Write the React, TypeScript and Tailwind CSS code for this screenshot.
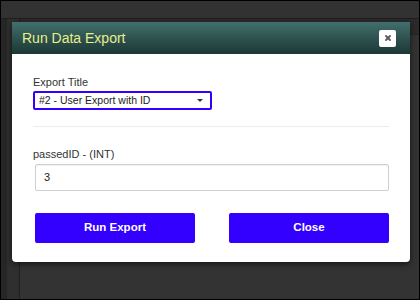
import { X } from 'lucide-react';

export default function App() {
  return (
    <div className="relative h-[300px] w-[420px] overflow-hidden border border-black bg-[#333333] font-['Liberation_Sans',Arial,sans-serif]">
      {/* page behind the modal */}
      <div className="h-[18px] border-b border-[#1e1e1e] bg-[#323232]" />
      <div className="flex h-full">
        <div className="w-[6px] bg-[#262626]" />
        <div className="w-[13px] border-r border-[#1f1f1f] bg-[#2f2f2f]" />
        <div className="flex-1">
          <div className="h-[16px] border-b border-[#262626] bg-[#2b2b2b]" />
        </div>
      </div>

      {/* modal */}
      <div className="absolute left-[11px] top-[21px] w-[398px] overflow-hidden rounded-b-[4px] bg-white shadow-[0_2px_6px_rgba(0,0,0,0.6)]">
        <div className="flex h-[32px] items-center justify-between bg-gradient-to-b from-[#426f6c] to-[#1c3836] pl-[10px] pr-[14px]">
          <span className="text-[14px] text-[#e6ef8a]">Run Data Export</span>
          <button className="flex h-[17px] w-[17px] items-center justify-center rounded-[2px] bg-white">
            <X className="h-[8px] w-[8px] text-[#5a5a5a]" strokeWidth={5.5} />
          </button>
        </div>

        <div className="px-[21px] pb-[19px] pt-[22px]">
          <div className="text-[11px] leading-[13px] text-[#333]">Export Title</div>
          <div className="mt-[2px] flex h-[19px] w-[179px] items-center justify-between rounded-[2px] border-2 border-[#3300ff] pl-[4px] pr-[7px]">
            <span className="text-[10.5px] text-[#222]">#2 - User Export with ID</span>
            <span className="h-0 w-0 border-x-[3px] border-t-[3px] border-x-transparent border-t-[#333]" />
          </div>

          <div className="mt-[16px] h-px bg-[#ececec]" />

          <div className="mt-[21px] text-[11px] leading-[13px] text-[#333]">passedID - (INT)</div>
          <div className="ml-[2px] mt-[3px] flex h-[27px] items-center rounded-[2px] border border-[#cfcfcf] pl-[8px] text-[11px] text-[#222] shadow-[inset_0_1px_1px_rgba(0,0,0,0.06)]">
            3
          </div>

          <div className="mt-[22px] flex justify-between pl-[2px]">
            <button className="h-[30px] w-[160px] rounded-[2px] bg-[#3300ff] text-[11.5px] font-bold text-white">
              Run Export
            </button>
            <button className="h-[30px] w-[160px] rounded-[2px] bg-[#3300ff] text-[11.5px] font-bold text-white">
              Close
            </button>
          </div>
        </div>
      </div>
    </div>
  );
}
